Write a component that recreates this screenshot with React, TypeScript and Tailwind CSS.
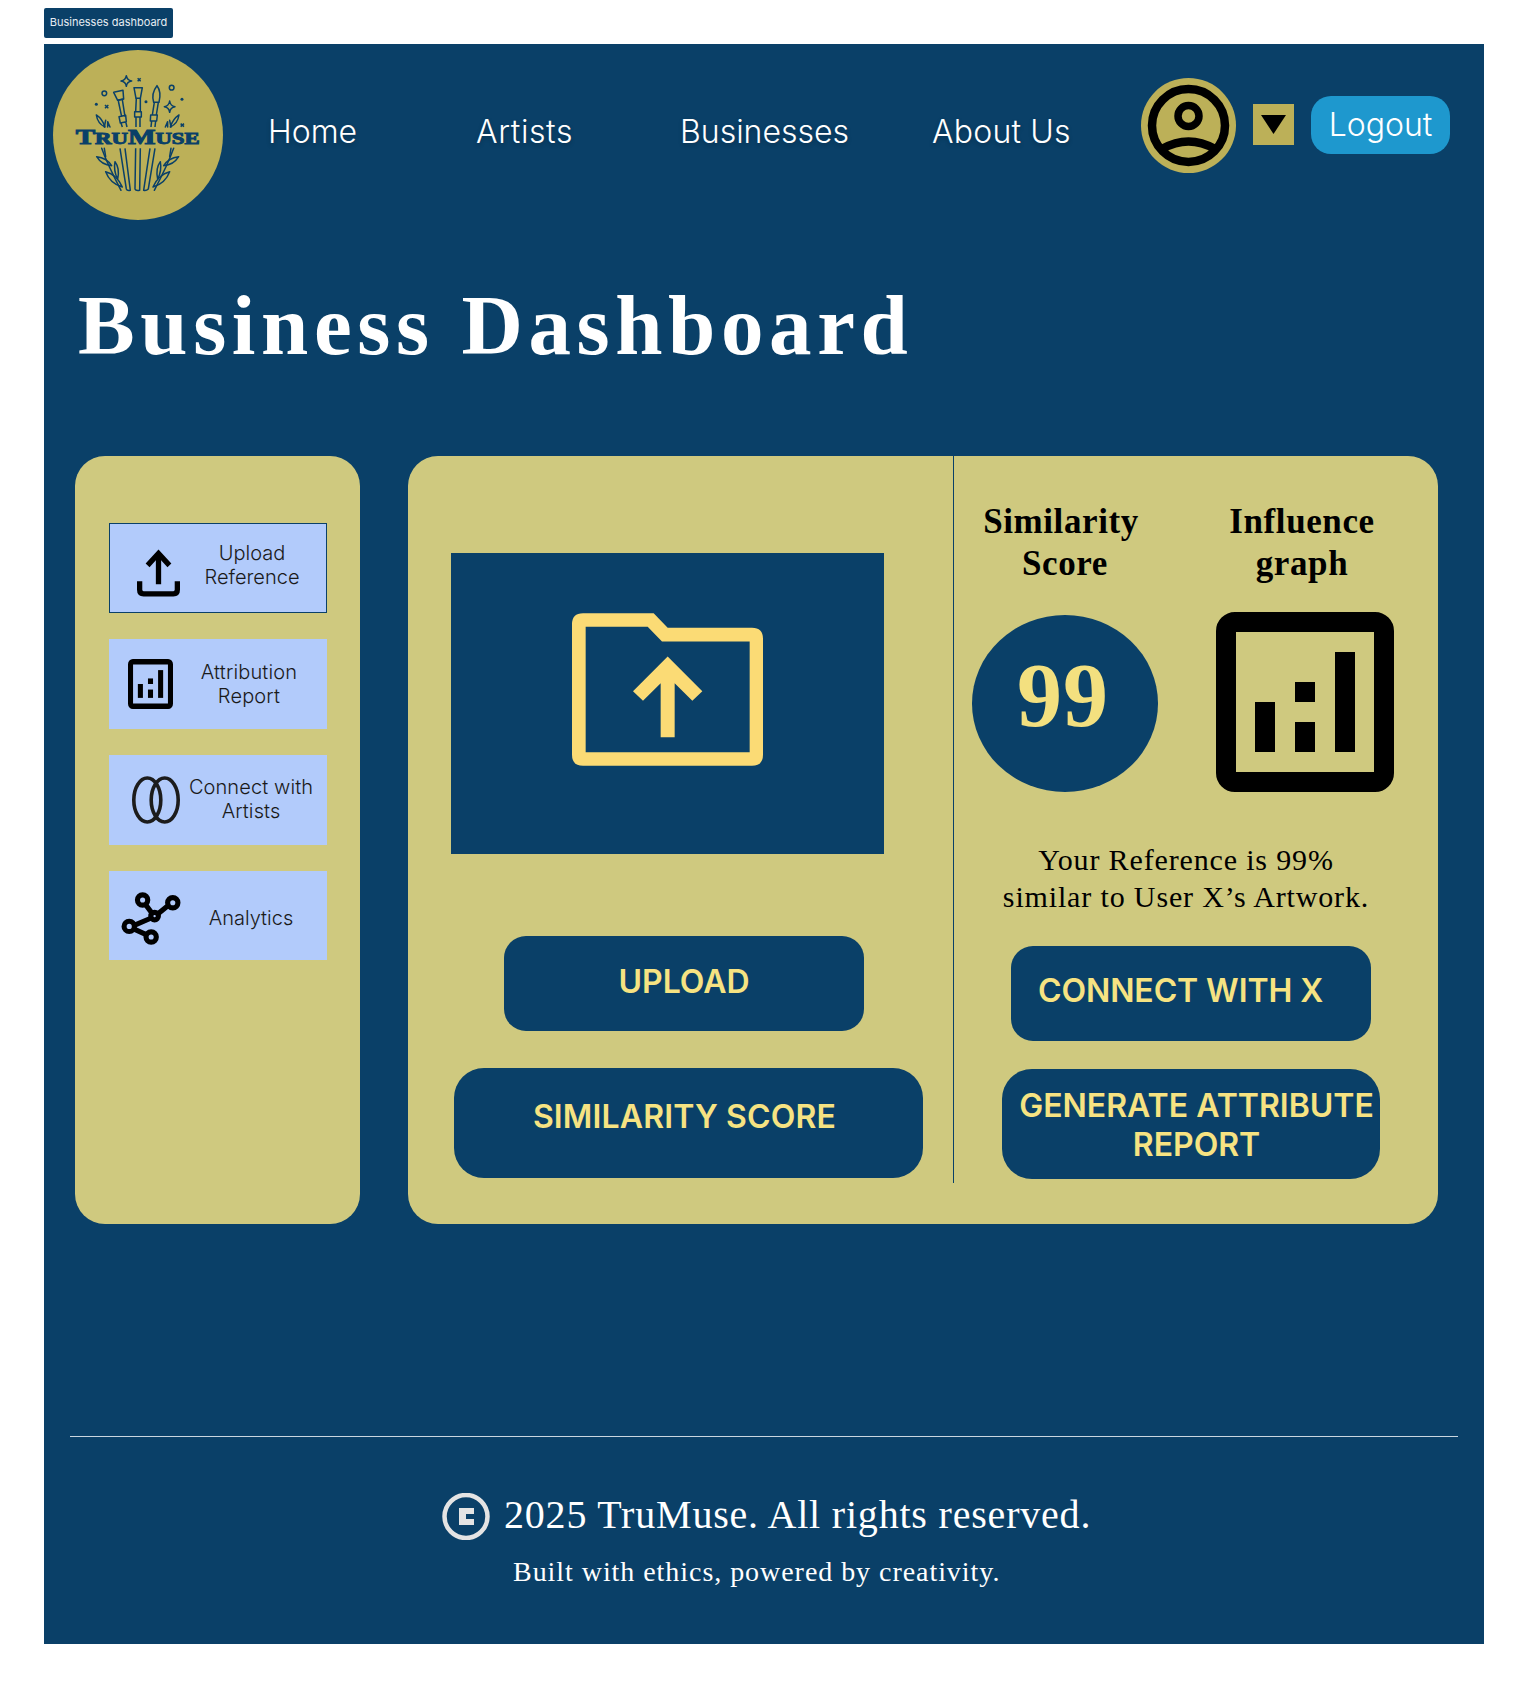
const navLinks = [
  { label: "Home", width: "w-[208px]", offset: "mb-[4px]" },
  { label: "Artists", width: "w-[204px] tracking-[0.6px]", offset: "mb-[5px]" },
  { label: "Businesses", width: "w-[252px]", offset: "mb-[7px]" },
  { label: "About Us", width: "w-[209px] tracking-[0.2px]", offset: "mb-[2px]" },
];

function LogoHalf() {
  return (
    <g fill="none" stroke="#0a4068" strokeWidth="4.5" strokeLinejoin="round" strokeLinecap="round">
      <path d="M94 150 Q112 162 120 186 Q98 176 94 150 Z" />
      <path d="M118 186 L122 166 M128 186 L128 170 L135 186" />
      <path d="M110 250 Q128 300 168 376" />
      <path d="M95 275 Q125 278 140 302 Q110 300 95 275 Z" />
      <path d="M122 320 Q155 328 172 366 Q135 355 122 320 Z" />
      <path d="M150 290 Q165 310 158 342 Q145 318 150 290 Z" />
      <path d="M118 250 L122 275" />
    </g>
  );
}

function Logo() {
  return (
    <svg className="h-[170px] w-[170px] shrink-0" viewBox="53 50 170 170">
      <circle cx="138" cy="135" r="85" fill="#bcb058" />
      <g transform="translate(65 65) scale(0.3333)">
        <LogoHalf />
        <g transform="translate(436 0) scale(-1 1)">
          <LogoHalf />
        </g>
        <g fill="none" stroke="#0a4068" strokeWidth="4.5" strokeLinejoin="round">
          <path d="M184 32 Q186 46 200 48 Q186 50 184 64 Q182 50 168 48 Q182 46 184 32 Z" />
          <path d="M314 108 Q316 123 330 125 Q316 127 314 142 Q312 127 298 125 Q312 123 314 108 Z" />
          <path d="M218 40 L227 49 M227 40 L218 49 M120 120 L130 130 M130 120 L120 130 M347 176 L357 185 M357 176 L347 185" />
          <circle cx="118" cy="85" r="7" />
          <circle cx="320" cy="68" r="7" />
          <path d="M146 82 L174 76 L176 102 L158 106 Z" />
          <path d="M158 106 L176 102 M160 108 L170 155 M172 104 L180 155 M162 155 L182 151 L184 170 L166 174 Z M168 174 L172 186 M182 170 L186 186" />
          <path d="M207 68 H232 L226 100 H213 Z" />
          <path d="M214 100 L212 140 M226 100 L226 140 M209 140 H229 V156 H209 Z M213 156 L213 186 M225 156 L225 186" />
          <path d="M276 62 Q290 80 282 112 H266 Q258 85 276 62 Z" />
          <path d="M268 112 L262 150 M280 112 L274 150 M257 150 H277 L275 168 H256 Z M260 168 L258 186 M272 168 L270 186" />
          <path d="M165 250 L184 372 Q186 378 196 376 L180 250" />
          <path d="M212 250 L210 372 Q212 378 224 376 L226 250" />
          <path d="M270 250 L250 372 Q244 378 236 376 L255 250" />
        </g>
        <g fill="#0a4068">
          <circle cx="94" cy="118" r="4.5" />
          <circle cx="243" cy="110" r="4.5" />
          <circle cx="351" cy="103" r="4.5" />
        </g>
        <text
          x="218"
          y="238"
          textAnchor="middle"
          textLength="372"
          lengthAdjust="spacingAndGlyphs"
          fill="#0a4068"
          stroke="#0a4068"
          strokeWidth="3"
          fontFamily="'Liberation Serif', serif"
          fontWeight="700"
          fontSize="64"
        >
          T<tspan fontSize="50">RU</tspan>M<tspan fontSize="50">USE</tspan>
        </text>
      </g>
    </svg>
  );
}

function AvatarIcon() {
  return (
    <svg className="h-[95px] w-[95px]" viewBox="0 0 95 95" fill="none" stroke="#000">
      <circle cx="47.5" cy="47.5" r="47.5" fill="#bcb058" stroke="none" />
      <circle cx="47.5" cy="47.5" r="36.5" strokeWidth="8.5" />
      <circle cx="47.5" cy="38" r="10.5" strokeWidth="7.5" />
      <path d="M21 71 Q47.5 56 74 71" strokeWidth="8.5" />
    </svg>
  );
}

function ReportIcon({ className }: { className: string }) {
  return (
    <svg className={className} viewBox="0 0 178 180" preserveAspectRatio="none">
      <rect x="10" y="10" width="158" height="160" rx="9" fill="none" stroke="#000" strokeWidth="20" />
      <rect x="39" y="90" width="20" height="50" />
      <rect x="79" y="70" width="20" height="20" />
      <rect x="79" y="110" width="20" height="30" />
      <rect x="119" y="40" width="20" height="100" />
    </svg>
  );
}

function UploadIcon() {
  return (
    <svg className="h-[48px] w-[43px]" viewBox="0 0 130 142" fill="none" stroke="#000" strokeWidth="16">
      <path d="M65 14 V105" />
      <path d="M32 48 L65 12 L98 48" />
      <path d="M8 96 V122 Q8 134 20 134 H110 Q122 134 122 122 V96" />
    </svg>
  );
}

function RingsIcon() {
  return (
    <svg className="h-[48px] w-[48px]" viewBox="0 0 48 48" fill="none" stroke="#1c1c1c" strokeWidth="3.6">
      <ellipse cx="15.3" cy="24" rx="13.5" ry="22" />
      <ellipse cx="32.7" cy="24" rx="13.5" ry="22" />
    </svg>
  );
}

function NodesIcon() {
  return (
    <svg className="h-[53px] w-[60px]" viewBox="0 0 175 152" fill="none" stroke="#000" strokeWidth="15">
      <path d="M72 36 L90 60 M135 40 L108 62 M40 95 L85 76 M40 108 L72 122" />
      <circle cx="63" cy="22" r="15" />
      <circle cx="151" cy="30" r="15" />
      <circle cx="98" cy="69" r="11" />
      <circle cx="24" cy="99" r="15" />
      <circle cx="88" cy="130" r="15" />
    </svg>
  );
}

function FolderIcon() {
  return (
    <svg className="mb-[28px] h-[153px] w-[191px]" viewBox="157 70 573 458" fill="#fbdb75">
      <path
        fillRule="evenodd"
        d="M190 70 H402 L444 114 H697 Q730 114 730 147 V495 Q730 528 697 528 H190 Q157 528 157 495 V103 Q157 70 190 70 Z M198 111 V487 H690 V155 H427 L384 111 Z"
      />
      <path d="M444 200 L548 304 L518 333 L465 280 V442 H423 V280 L370 333 L340 304 Z" />
    </svg>
  );
}

function CopyrightIcon() {
  return (
    <svg className="h-[47px] w-[50px] shrink-0" viewBox="0 0 50 47">
      <circle cx="25" cy="23.5" r="21.5" fill="none" stroke="#e4e4e4" strokeWidth="4.5" />
      <path fill="#e4e4e4" d="M18 15 H33 V21 H25 V26 H33 V32 H18 Z" />
    </svg>
  );
}

const sideItems = [
  { icon: <UploadIcon />, iconBox: "w-[70px] justify-end pt-[9px]", text: ["Upload", "Reference"], textBox: "w-[144px] pb-[6px]", extra: "h-[90px] border border-[#0a4068]" },
  { icon: <ReportIcon className="h-[50px] w-[45px]" />, iconBox: "w-[64px] justify-end", text: ["Attribution", "Report"], textBox: "w-[152px] tracking-[0.15px]", extra: "h-[90px]" },
  { icon: <RingsIcon />, iconBox: "w-[71px] justify-end", text: ["Connect with", "Artists"], textBox: "w-[142px] pb-[2px] tracking-[0.1px]", extra: "h-[90px]" },
  { icon: <NodesIcon />, iconBox: "w-[72px] justify-end pt-[6px]", text: ["Analytics"], textBox: "w-[140px] pt-[4px]", extra: "h-[89px]" },
];

export default function App() {
  return (
    <div className="h-[1684px] w-[1524px] bg-white pl-[44px] pt-2 font-['Inter',sans-serif]">
      <div className="flex h-[30px] w-[129px] items-center justify-center rounded-[2px] bg-[#0a4068] pb-[2px] text-[11px] text-[#e6edf3]">
        Businesses dashboard
      </div>

      <div className="mt-[6px] flex h-[1600px] w-[1440px] flex-col bg-[#0a4068]">
        <header className="flex items-center pl-[9px] pt-[6px]">
          <Logo />
          <nav className="ml-[45px] flex font-light text-white">
            {navLinks.map((link) => (
              <a key={link.label} className={`${link.width} ${link.offset} text-[32px] leading-[40px] [text-shadow:0_2px_4px_rgba(0,0,0,0.25)]`}>
                {link.label}
              </a>
            ))}
          </nav>
          <div className="mb-[19px]">
            <AvatarIcon />
          </div>
          <button className="mb-[21px] ml-[17px] flex h-[41px] w-[41px] items-center justify-center bg-[#bcb058]">
            <svg className="h-[19px] w-[25px]" viewBox="0 0 25 19">
              <path d="M0 0 H25 L12.5 19 Z" />
            </svg>
          </button>
          <button className="mb-[20px] ml-[17px] flex h-[58px] w-[139px] items-center justify-center rounded-[20px] bg-[#1e98ce] text-[32px] font-light text-white">
            Logout
          </button>
        </header>

        <h1 className="ml-[34px] mt-[55px] font-['Liberation_Serif',serif] text-[85px] font-bold leading-[100px] tracking-[5.6px] text-white">
          Business Dashboard
        </h1>

        <div className="ml-[31px] mt-[81px] flex gap-[48px]">
          <aside className="flex h-[768px] w-[285px] flex-col gap-[26px] rounded-[30px] bg-[#cfc97f] pl-[34px] pt-[67px]">
            {sideItems.map((item) => (
              <div key={item.text[0]} className={`flex w-[218px] items-center bg-[#b2cbfb] ${item.extra}`}>
                <div className={`flex shrink-0 ${item.iconBox}`}>{item.icon}</div>
                <div className={`text-center text-[20px] font-light leading-[24px] text-[#1a1a1a] ${item.textBox}`}>
                  {item.text.map((line) => (
                    <div key={line}>{line}</div>
                  ))}
                </div>
              </div>
            ))}
          </aside>

          <section className="flex h-[768px] w-[1030px] items-start rounded-[30px] bg-[#cfc97f]">
            <div className="h-[727px] w-[546px] shrink-0 border-r border-[#0a4068] pt-[97px]">
              <div className="ml-[43px] flex h-[301px] w-[433px] items-center justify-center bg-[#0a4068]">
                <FolderIcon />
              </div>
              <button className="ml-[96px] mt-[82px] block h-[95px] w-[360px] rounded-[22px] bg-[#0a4068] pb-[3px] text-[32px] font-semibold text-[#f6e382]">
                UPLOAD
              </button>
              <button className="ml-[46px] mt-[37px] block h-[110px] w-[469px] rounded-[30px] bg-[#0a4068] pb-[12px] pr-[8px] text-[32px] font-semibold tracking-[0.15px] text-[#f6e382]">
                SIMILARITY SCORE
              </button>
            </div>

            <div className="w-[484px] pt-[45px] font-['Liberation_Serif',serif]">
              <div className="ml-[18px] flex text-[35px] font-bold leading-[42px] tracking-[0.6px] text-black">
                <h2 className="w-[186px] whitespace-nowrap text-center">
                  <span className="block pr-[8px]">Similarity</span>
                  Score
                </h2>
                <h2 className="ml-[58px] w-[178px] pr-[6px] text-center">
                  Influence
                  <br />
                  graph
                </h2>
              </div>
              <div className="ml-[18px] mt-[27px] flex items-start">
                <div className="mt-[3px] flex h-[177px] w-[186px] items-center justify-center rounded-[50%] bg-[#0a4068] pb-[16px] pr-[4px] text-[90px] font-bold tracking-[1px] text-[#f3e07f]">
                  99
                </div>
                <ReportIcon className="ml-[58px] h-[180px] w-[178px]" />
              </div>
              <p className="mt-[49px] pr-[20px] text-center text-[30px] leading-[37px] tracking-[0.85px] text-black">
                Your Reference is 99%
                <br />
                similar to User X’s Artwork.
              </p>
              <button className="ml-[57px] mt-[31px] block h-[95px] w-[360px] rounded-[22px] bg-[#0a4068] pb-[5px] pl-[27px] text-left font-['Inter',sans-serif] text-[32px] font-semibold tracking-[-0.1px] text-[#f6e382]">
                CONNECT WITH X
              </button>
              <button className="ml-[48px] mt-[28px] block h-[110px] w-[378px] whitespace-nowrap rounded-[30px] bg-[#0a4068] pl-[11px] pt-[1px] text-center font-['Inter',sans-serif] text-[32px] font-semibold leading-[39px] text-[#f6e382]">
                GENERATE ATTRIBUTE
                <br />
                REPORT
              </button>
            </div>
          </section>
        </div>

        <footer className="ml-[26px] mt-[212px] w-[1388px] border-t border-[#c9d6e0] font-['Liberation_Serif',serif] text-white">
          <div className="ml-[371px] mt-[56px] flex items-start gap-[13px]">
            <CopyrightIcon />
            <span className="text-[40px] leading-[43px] tracking-[0.8px]">2025 TruMuse. All rights reserved.</span>
          </div>
          <p className="ml-[443px] mt-[15px] text-[28px] leading-[34px] tracking-[0.95px]">Built with ethics, powered by creativity.</p>
        </footer>
      </div>
    </div>
  );
}
